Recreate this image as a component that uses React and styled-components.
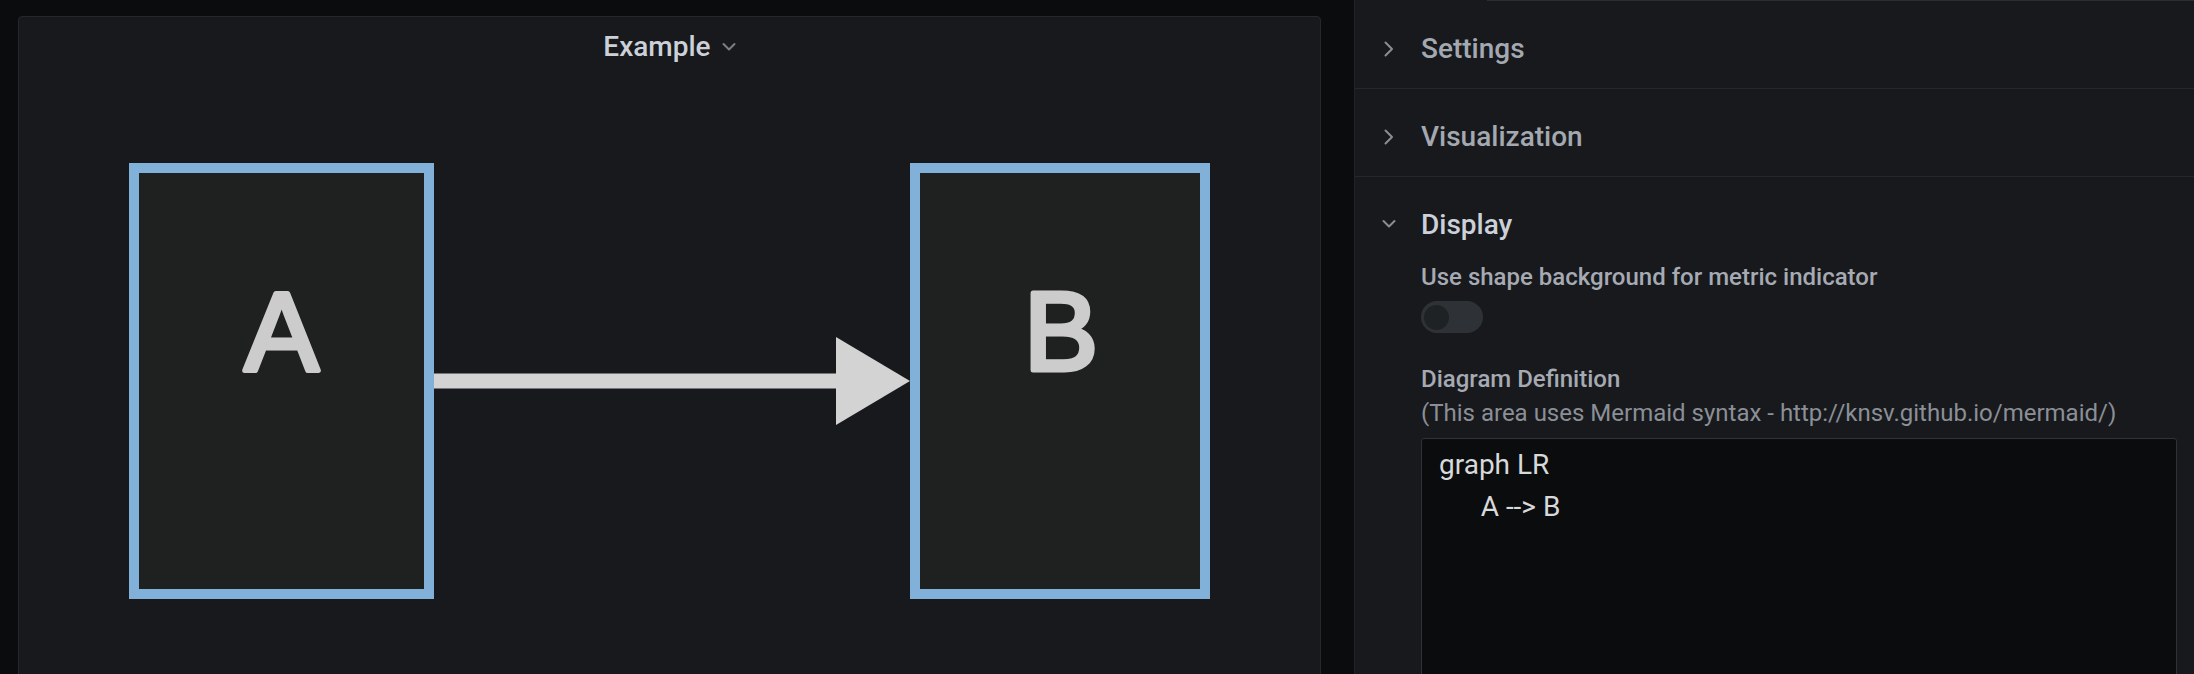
import React from "react";
import styled, { createGlobalStyle } from "styled-components";

const GlobalStyle = createGlobalStyle`
  html, body {
    margin: 0;
    padding: 0;
    background: #0b0c0e;
    font-family: Roboto, "Liberation Sans", sans-serif;
  }
`;

const Page = styled.div`
  display: flex;
  height: 674px;
  overflow: hidden;
  background: #0b0c0e;
`;

const Main = styled.div`
  flex: 0 0 1354px;
  padding: 16px 33px 0 18px;
  box-sizing: border-box;
`;

const Panel = styled.div`
  height: 720px;
  background: #17191d;
  border: 1px solid #25272c;
  border-radius: 4px;
  display: flex;
  flex-direction: column;
`;

const PanelHeader = styled.div`
  display: flex;
  justify-content: center;
  align-items: center;
  gap: 11px;
  padding-top: 13px;
  height: 33px;
`;

const PanelTitle = styled.span`
  font-size: 28px;
  font-weight: 500;
  color: #ccd0d8;
`;

const Diagram = styled.svg`
  display: block;
  width: 1301px;
  height: 600px;
`;

const Sidebar = styled.div`
  flex: 1;
  background: #17191d;
  border-left: 1px solid #202226;
  display: flex;
  flex-direction: column;
`;

const TopStrip = styled.div`
  height: 4px;
  display: flex;
`;

const TopStripBox = styled.div`
  flex: 1;
  margin-left: 132px;
  background: #111217;
  border-left: 1px solid #2a2d33;
  border-bottom: 1px solid #2a2d33;
`;

const Section = styled.div`
  border-bottom: ${(p) => (p.$last ? "none" : "1px solid #25272c")};
`;

const SectionHeader = styled.div`
  height: ${(p) => (p.$open ? "86px" : "87px")};
  box-sizing: border-box;
  padding: 8px 0 0 27px;
  display: flex;
  align-items: center;
  gap: 25px;
`;

const SectionTitle = styled.span`
  font-size: 28px;
  font-weight: 500;
  color: ${(p) => (p.$open ? "#ccd0d8" : "#a4a8b0")};
`;

const SectionBody = styled.div`
  padding: 0 17px 0 66px;
  display: flex;
  flex-direction: column;
  align-items: flex-start;
`;

const Label = styled.div`
  font-size: 24px;
  font-weight: 500;
  color: #a6aab2;
  margin-top: ${(p) => p.$mt || "0px"};
`;

const Description = styled.div`
  font-size: 24px;
  color: #8b8f96;
  margin-top: 6px;
`;

const Switch = styled.div`
  width: 62px;
  height: 32px;
  margin-top: 10px;
  border-radius: 16px;
  background: #2e3236;
  display: flex;
  align-items: center;
  padding-left: 3px;
  box-sizing: border-box;
`;

const Knob = styled.div`
  width: 25px;
  height: 25px;
  border-radius: 50%;
  background: #1f2225;
`;

const Editor = styled.textarea`
  margin-top: 11px;
  width: 100%;
  height: 320px;
  box-sizing: border-box;
  background: #0b0c0e;
  border: 1px solid #2f3237;
  border-radius: 3px;
  padding: 5px 17px;
  font-family: Roboto, "Liberation Sans", sans-serif;
  font-size: 28px;
  line-height: 42px;
  color: #d8d9da;
  resize: none;
  outline: none;
`;

const Chevron = ({ open, color = "#8a8d93" }) => (
  <svg width={14} height={18} viewBox="0 0 14 18" fill="none">
    <path
      d={open ? "M1.5 6 L7 11.5 L12.5 6" : "M3.5 2.5 L10 9 L3.5 15.5"}
      stroke={color}
      strokeWidth="2"
      strokeLinecap="round"
      strokeLinejoin="round"
    />
  </svg>
);

const Node = ({ x, y, w, h, label, cx }) => (
  <g>
    <rect x={x} y={y} width={w} height={h} fill="#1f2020" stroke="#81b1d9" strokeWidth="10" />
    <text
      x={cx}
      y={370}
      textAnchor="middle"
      fontFamily="'Liberation Sans', Arial, sans-serif"
      fontSize="111"
      fill="#cccccc"
      stroke="#cccccc"
      strokeWidth="5"
      strokeLinejoin="round"
    >
      {label}
    </text>
  </g>
);

const SectionRow = ({ title, open, last, children }) => (
  <Section $last={last}>
    <SectionHeader $open={open}>
      <Chevron open={open} />
      <SectionTitle $open={open}>{title}</SectionTitle>
    </SectionHeader>
    {children}
  </Section>
);

export default function App() {
  return (
    <>
      <GlobalStyle />
      <Page>
        <Main>
          <Panel>
            <PanelHeader>
              <PanelTitle>Example</PanelTitle>
              <svg width="14" height="10" viewBox="0 0 14 10" fill="none">
                <path d="M1.5 2 L7 7.5 L12.5 2" stroke="#7d7f85" strokeWidth="2" strokeLinecap="round" strokeLinejoin="round" />
              </svg>
            </PanelHeader>
            <Diagram viewBox="19 63 1301 600">
              <Node x={134} y={168} w={295} h={426} label="A" cx={281.5} />
              <Node x={915} y={168} w={290} h={426} label="B" cx={1061} />
              <rect x={434} y={373.5} width={404} height={15} fill="#d3d3d3" />
              <polygon points="836,337 910,381 836,425" fill="#d3d3d3" />
            </Diagram>
          </Panel>
        </Main>
        <Sidebar>
          <TopStrip>
            <TopStripBox />
          </TopStrip>
          <SectionRow title="Settings" />
          <SectionRow title="Visualization" />
          <SectionRow title="Display" open last>
            <SectionBody>
              <Label>Use shape background for metric indicator</Label>
              <Switch>
                <Knob />
              </Switch>
              <Label $mt="32px">Diagram Definition</Label>
              <Description>(This area uses Mermaid syntax - http://knsv.github.io/mermaid/)</Description>
              <Editor readOnly value={"graph LR\n      A --> B"} />
            </SectionBody>
          </SectionRow>
        </Sidebar>
      </Page>
    </>
  );
}
